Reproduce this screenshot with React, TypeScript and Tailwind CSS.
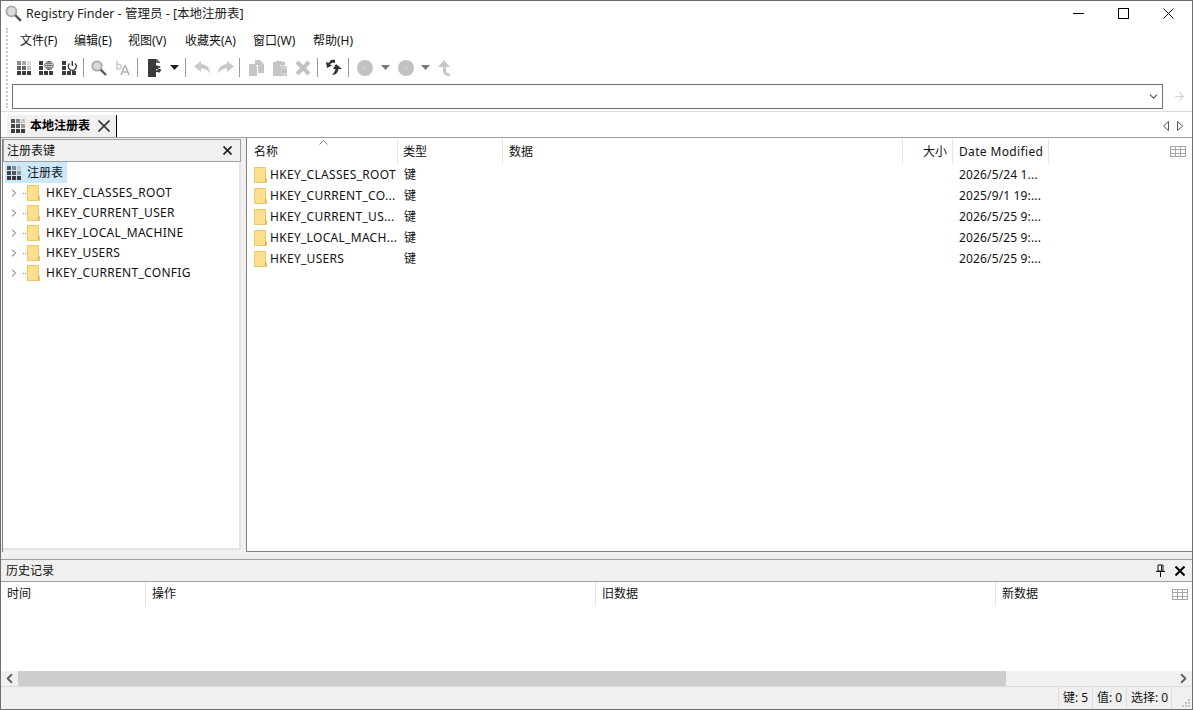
import React from 'react';
import { ChevronLeft, ChevronRight, ChevronDown, ArrowRight } from 'lucide-react';

const FONT = "font-['Noto_Sans','Noto_Sans_CJK_SC',sans-serif]";

function GridIcon({ colors }: { colors: string[] }) {
  return (
    <svg width="14" height="14" viewBox="0 0 14 14" shapeRendering="crispEdges">
      {colors.map((c, i) => (
        <rect key={i} x={(i % 3) * 5} y={Math.floor(i / 3) * 5} width="4" height="4" fill={c} />
      ))}
    </svg>
  );
}

const D = '#3a3a3a';
const toolbarGrid = ['#8a8a8a', '#a8a8a8', '#dedede', '#666', '#666', '#c4c4c4', D, D, D];
const treeGrid = ['#555', '#888', '#c8c8c8', '#444', '#555', '#999', D, D, D];

function GlobeGrid() {
  return (
    <svg width="15" height="14" viewBox="0 0 15 14">
      <g shapeRendering="crispEdges">
        {[0, 5, 10].map((x) => <rect key={x} x={x} y="10" width="4" height="4" fill={D} />)}
        {[0, 5].map((y) => <rect key={y} x="0" y={y} width="4" height="4" fill={D} />)}
      </g>
      <circle cx="10" cy="4.500" r="4.200" fill="#fff" stroke={D} strokeWidth="0.8" />
      <path d="M6 4.500h8M10 .5v8M7 2.300h6M7 6.700h6M10 .5c-2.400 2-2.400 6 0 8M10 .5c2.400 2 2.400 6 0 8" stroke={D} strokeWidth="0.6" fill="none" />
    </svg>
  );
}

function PowerGrid() {
  return (
    <svg width="15" height="14" viewBox="0 0 15 14">
      <g shapeRendering="crispEdges">
        {[0, 5, 10].map((x) => <rect key={x} x={x} y="10" width="4" height="4" fill={D} />)}
        {[0, 5].map((y) => <rect key={y} x="0" y={y} width="4" height="4" fill={D} />)}
      </g>
      <path d="M7.500 2.500a4 4 0 1 0 5.600 0" stroke={D} strokeWidth="1.300" fill="none" />
      <path d="M10.300 0v5" stroke={D} strokeWidth="1.400" />
    </svg>
  );
}

function Magnifier({ size = 16 }: { size?: number }) {
  return (
    <svg width={size} height={size} viewBox="0 0 16 16">
      <circle cx="6" cy="6" r="4.700" fill="#dcdcdc" stroke="#a8a8a8" strokeWidth="1.700" />
      <path d="M9.600 9.600L15 15" stroke="#555" strokeWidth="2.300" />
    </svg>
  );
}

function Folder() {
  return (
    <svg width="13" height="16" viewBox="0 0 13 16" className="shrink-0">
      <path d="M.5.5h11v11h1v4H.5z" fill="#fbdf8f" stroke="#ecc766" />
      <path d="M11.500 11.500V15" stroke="#d9b04f" />
    </svg>
  );
}

function Cross({ size, stroke = '#111', width = 1 }: { size: number; stroke?: string; width?: number }) {
  return (
    <svg width={size} height={size} viewBox={`0 0 ${size} ${size}`} className="shrink-0">
      <path d={`M.5.5L${size - 0.5} ${size - 0.5}M${size - 0.5} .5L.5 ${size - 0.5}`} stroke={stroke} strokeWidth={width} fill="none" />
    </svg>
  );
}

function Sep() {
  return <div className="w-px h-[19px] bg-[#9a9a9a] shrink-0" />;
}

function Caret({ color = '#1f1f1f' }: { color?: string }) {
  return (
    <svg width="9" height="5" viewBox="0 0 9 5">
      <path d="M0 0h9L4.500 5z" fill={color} />
    </svg>
  );
}

function GreyCircle({ arrow }: { arrow: 'l' | 'r' }) {
  return (
    <svg width="16" height="16" viewBox="0 0 16 16">
      <circle cx="8" cy="8" r="8" fill="#c2c2c2" />
      <path d={arrow === 'l' ? 'M10 8H6M8 6L6 8l2 2' : 'M6 8h4M8 6l2 2-2 2'} stroke="#cfcfcf" fill="none" />
    </svg>
  );
}

function TableIcon() {
  return (
    <svg width="16" height="11" viewBox="0 0 16 11" shapeRendering="crispEdges">
      <path d="M.5.5h15v10H.5zM.5 3.500h15M.5 7.500h15M5.500.5v10M10.500.5v10" fill="none" stroke="#a6a6a6" />
    </svg>
  );
}

function Toolbar() {
  return (
    <div className="h-[25px] flex items-center pl-[16px] mt-[2px]">
      <div className="w-[23px] shrink-0 pl-px"><GridIcon colors={toolbarGrid} /></div>
      <div className="w-[23px] shrink-0"><GlobeGrid /></div>
      <div className="w-[21px] shrink-0"><PowerGrid /></div>
      <Sep />
      <div className="w-[32px] shrink-0 pl-[7px]"><Magnifier /></div>
      <div className="w-[21px] shrink-0">
        <svg width="15" height="16" viewBox="0 0 15 16">
          <path d="M1 1v8h1.200a2.400 2.400 0 1 0 0-4.600" fill="none" stroke="#c4c4c4" strokeWidth="1.400" />
          <path d="M5 15l3.500-9h1l3.500 9M6.500 12h5" fill="none" stroke="#b4b4b4" strokeWidth="1.600" />
        </svg>
      </div>
      <Sep />
      <div className="w-[47px] shrink-0 pl-[10px] flex items-center">
        <svg width="13" height="18" viewBox="0 0 13 18" className="shrink-0">
          <path d="M0 0h8v18H0z" fill="#3a3a3a" />
          <path d="M8 0h1l3 3v1H8z" fill="#6a6a6a" />
          <path d="M7 8l2-2 1 1.200c1.200-.5 2.200 0 2.800 1l-1.800.8c-.4-.4-.8-.4-1.200 0l1 1H7z" fill="#3a3a3a" />
          <path d="M12.800 12l-2 2-1-1.200c-1.200.5-2.200 0-2.800-1l1.800-.8c.4.4.8.4 1.200 0l-1-1h3.800z" fill="#3a3a3a" />
        </svg>
        <div className="ml-[9px]"><Caret /></div>
      </div>
      <div className="-ml-[10px] w-[10px]" />
      <Sep />
      <div className="w-[31px] shrink-0 pl-[8px]">
        <svg width="17" height="14" viewBox="0 0 17 14">
          <path d="M7 0L0 5.500 7 11V7.500c4 0 7 1.500 9 5 0-5-3-9-9-9.500z" fill="#c8c8c8" />
        </svg>
      </div>
      <div className="w-[22px] shrink-0">
        <svg width="17" height="14" viewBox="0 0 17 14">
          <path d="M10 0l7 5.500L10 11V7.500c-4 0-7 1.500-9 5 0-5 3-9 9-9.500z" fill="#c8c8c8" />
        </svg>
      </div>
      <Sep />
      <div className="w-[33px] shrink-0 pl-[9px]">
        <svg width="15" height="16" viewBox="0 0 15 16">
          <path d="M6 0h5l4 4v9H9V5H6z" fill="#c4c4c4" />
          <path d="M0 4h5.500L8 6.500V16H0z" fill="#c4c4c4" />
        </svg>
      </div>
      <div className="w-[22px] shrink-0">
        <svg width="14" height="16" viewBox="0 0 14 16">
          <path d="M0 2h3V1h6v1h3v3H7v11H0z" fill="#c4c4c4" />
          <path d="M7.500 6h4.500l2 2v8H7.500z" fill="#d4d4d4" stroke="#c4c4c4" />
          <path d="M9 10h4M9 12h4" stroke="#a8a8a8" />
        </svg>
      </div>
      <div className="w-[22px] shrink-0">
        <svg width="16" height="16" viewBox="0 0 16 16">
          <path d="M2 2l12 12M14 2L2 14" stroke="#c2c2c2" strokeWidth="4" />
        </svg>
      </div>
      <Sep />
      <div className="w-[30px] shrink-0 pl-[8px]">
        <svg width="17" height="17" viewBox="0 0 17 17">
          <path d="M9 1C6 0 4 1 3 4L0 3l1 6 5-2.500-2-1c1-1.500 2.500-2 5-1.500z" fill="#2f2f2f" />
          <path d="M10 5l-3 5 2.500 0C9 12 8 14 6 16c4 0 6-3 6.500-6H16z" fill="#2f2f2f" />
        </svg>
      </div>
      <Sep />
      <div className="w-[32px] shrink-0 pl-[8px]"><GreyCircle arrow="l" /></div>
      <div className="w-[17px] shrink-0"><Caret color="#777" /></div>
      <div className="w-[23px] shrink-0"><GreyCircle arrow="r" /></div>
      <div className="w-[17px] shrink-0"><Caret color="#777" /></div>
      <div className="shrink-0">
        <svg width="13" height="16" viewBox="0 0 13 16">
          <path d="M6 0l6 7H8v3c0 2 1 3 4 4v2c-5 0-7-2-7-6V7H0z" fill="#c8c8c8" />
        </svg>
      </div>
    </div>
  );
}

const menus: [string, string][] = [
  ['文件(F)', 'w-[54px]'],
  ['编辑(E)', 'w-[54px]'],
  ['视图(V)', 'w-[57px]'],
  ['收藏夹(A)', 'w-[68px]'],
  ['窗口(W)', 'w-[60px]'],
  ['帮助(H)', 'w-[60px]'],
];

const treeKeys = ['HKEY_CLASSES_ROOT', 'HKEY_CURRENT_USER', 'HKEY_LOCAL_MACHINE', 'HKEY_USERS', 'HKEY_CURRENT_CONFIG'];

const listRows = [
  ['HKEY_CLASSES_ROOT', '2026/5/24 1...'],
  ['HKEY_CURRENT_CO...', '2025/9/1 19:...'],
  ['HKEY_CURRENT_US...', '2026/5/25 9:...'],
  ['HKEY_LOCAL_MACH...', '2026/5/25 9:...'],
  ['HKEY_USERS', '2026/5/25 9:...'],
];

export default function App() {
  return (
    <div className={`${FONT} relative w-[1193px] h-[710px] overflow-hidden bg-[#f0f0f0] border border-[#6e6e6e] text-[12px] leading-[16px] text-[#111] flex flex-col`}>
      {/* title bar */}
      <div className="h-[27px] bg-white flex items-center shrink-0 pl-[4px] pb-[2px]">
        <Magnifier size={17} />
        <span className="ml-[4px] text-[12.5px] text-[#222]">Registry Finder - 管理员 - [本地注册表]</span>
        <div className="ml-auto flex items-center pr-[18px] gap-[34px]">
          <div className="w-[11px] h-px bg-black" />
          <div className="w-[11px] h-[11px] border border-black" />
          <Cross size={11} />
        </div>
      </div>

      {/* menu, toolbar, address */}
      <div className="h-[83px] bg-white shrink-0 flex">
        <div className="w-[19px] shrink-0 flex justify-center -ml-[4px] pl-[1px]">
          <div className="w-[2px] h-[80px] border-l-2 border-dotted border-[#c4c4c4]" />
        </div>
        <div className="flex-1 min-w-0 -ml-[3px]">
          <div className="h-[25px] flex items-center pl-[7px]">
            {menus.map(([m, w]) => (
              <div key={m} className={`${w} shrink-0`}>{m}</div>
            ))}
          </div>
          <div className="-ml-[13px]"><Toolbar /></div>
          <div className="flex items-center mt-[4px] -ml-[1px]">
            <div className="w-[1151px] h-[25px] border border-[#6e6e6e] bg-white flex items-center justify-end pr-[2px] shrink-0">
              <ChevronDown size={13} className="text-[#555]" />
            </div>
            <ArrowRight size={13} className="ml-[10px] text-[#d0d0d0]" />
          </div>
        </div>
      </div>

      {/* tabs */}
      <div className="h-[26px] bg-white border-t border-[#dcdcdc] shrink-0 flex items-end pl-[6px]">
        <div className="h-[22px] w-[110px] bg-[#f0f0f0] flex items-center pl-[4px] border-r border-black shrink-0">
          <GridIcon colors={treeGrid} />
          <span className="ml-[5px] font-semibold text-black">本地注册表</span>
          <div className="ml-[8px]"><Cross size={12} stroke="#333" width={1.6} /></div>
        </div>
        <div className="ml-auto flex items-center h-[22px] pr-[9px] gap-[8px]">
          <svg width="6" height="10" viewBox="0 0 6 10"><path d="M5.500.5v9L.5 5z" fill="#fff" stroke="#555" /></svg>
          <svg width="6" height="10" viewBox="0 0 6 10"><path d="M.5.5v9l5-4.500z" fill="#fff" stroke="#555" /></svg>
        </div>
      </div>

      {/* main panes */}
      <div className="h-[415px] shrink-0 border-t border-[#a0a0a0] flex pl-px">
        <div className="w-[239px] shrink-0 mt-px border-l border-[#808080] flex flex-col">
          <div className="h-[23px] shrink-0 bg-[#f0f0f0] border border-[#a0a0a0] flex items-center justify-between pl-[3px] pr-[8px]">
            <span>注册表键</span>
            <Cross size={9} stroke="#222" width={1.7} />
          </div>
          <div className="flex-1 bg-white border-r-2 border-b-2 border-[#e4e4e4] pl-[2px] mb-[2px]">
            <div className="h-[21px] w-[62px] bg-[#cce8ff] flex items-center pl-[2px]">
              <GridIcon colors={treeGrid} />
              <span className="ml-[6px]">注册表</span>
            </div>
            {treeKeys.map((k) => (
              <div key={k} className="h-[20px] flex items-center pl-[3px]">
                <ChevronRight size={12} strokeWidth={2.4} className="text-[#a0a0a0] shrink-0" />
                <div className="ml-[3px] w-[3px] border-t border-dotted border-[#888] shrink-0" />
                <div className="ml-[1px]"><Folder /></div>
                <span className="ml-[6px] tracking-[0.3px] whitespace-nowrap">{k}</span>
              </div>
            ))}
          </div>
        </div>

        <div className="ml-[5px] flex-1 min-w-0 bg-white border-l border-b border-[#808080] relative">
          <div className="h-[26px] pt-px flex items-center">
            <div className="w-[151px] pl-[7px] border-r border-[#e4e4e4] h-full flex items-center relative">
              名称
              <svg width="9" height="5" viewBox="0 0 9 5" className="absolute left-[72px] top-[1px]"><path d="M.5 4.500L4.500.5l4 4" fill="none" stroke="#888" /></svg>
            </div>
            <div className="w-[105px] pl-[5px] border-r border-[#e4e4e4] h-full flex items-center">类型</div>
            <div className="w-[400px] pl-[6px] border-r border-[#e4e4e4] h-full flex items-center">数据</div>
            <div className="w-[50px] pr-[5px] border-r border-[#e4e4e4] h-full flex items-center justify-end">大小</div>
            <div className="w-[96px] pl-[6px] border-r border-[#e4e4e4] h-full flex items-center tracking-[0.35px] whitespace-nowrap">Date Modified</div>
            <div className="ml-auto pr-[6px] flex items-center"><TableIcon /></div>
          </div>
          {listRows.map(([n, d]) => (
            <div key={n} className="h-[21px] flex items-center">
              <div className="w-[151px] pl-[7px] flex items-center shrink-0 whitespace-nowrap">
                <Folder />
                <span className="ml-[3px] tracking-[0.3px]">{n}</span>
              </div>
              <div className="w-[555px] pl-[6px] shrink-0">键</div>
              <div className="pl-[6px] tracking-[0.15px]">{d}</div>
            </div>
          ))}
        </div>
      </div>

      <div className="h-[7px] shrink-0" />

      {/* history */}
      <div className="shrink-0 border-y border-[#a0a0a0] h-[23px] flex items-center pl-[5px] pr-[7px] bg-[#f0f0f0]">
        <span>历史记录</span>
        <div className="ml-auto flex items-center gap-[9px]">
          <svg width="11" height="13" viewBox="0 0 11 13"><path d="M3 1h5v6H3zM1 7.500h9M5.500 8v5M6.500 1.500v5" fill="none" stroke="#111" /></svg>
          <Cross size={10} stroke="#000" width={2} />
        </div>
      </div>
      <div className="h-[89px] shrink-0 bg-white">
        <div className="h-[24px] flex items-center">
          <div className="w-[145px] pl-[6px] border-r border-[#e4e4e4] h-full flex items-center">时间</div>
          <div className="w-[450px] pl-[6px] border-r border-[#e4e4e4] h-full flex items-center">操作</div>
          <div className="w-[400px] pl-[6px] border-r border-[#e4e4e4] h-full flex items-center">旧数据</div>
          <div className="pl-[6px]">新数据</div>
          <div className="ml-auto pr-[4px] flex items-center"><TableIcon /></div>
        </div>
      </div>

      {/* horizontal scrollbar */}
      <div className="h-[15px] shrink-0 bg-[#f0f0f0] flex items-center">
        <div className="w-[17px] shrink-0 flex justify-center"><ChevronLeft size={15} strokeWidth={3} className="text-[#606060]" /></div>
        <div className="w-[988px] h-full bg-[#cdcdcd] shrink-0" />
        <div className="ml-auto w-[17px] flex justify-center"><ChevronRight size={15} strokeWidth={3} className="text-[#606060]" /></div>
      </div>

      {/* status bar */}
      <div className="flex-1 min-h-0 border-t border-[#dcdcdc] flex items-center justify-end relative">
        <div className="w-[34px] h-full border-l border-[#dcdcdc] pl-[4px] flex items-center whitespace-nowrap">键: 5</div>
        <div className="w-[34px] h-full border-l border-[#dcdcdc] pl-[4px] flex items-center whitespace-nowrap">值: 0</div>
        <div className="w-[46px] h-full border-x border-[#dcdcdc] pl-[4px] flex items-center whitespace-nowrap">选择: 0</div>
        <div className="w-[20px] h-full flex items-end justify-end pr-px pb-px">
          <svg width="9" height="9" viewBox="0 0 9 9">
            <path d="M6 0h2v2H6zM3 3h2v2H3zM6 3h2v2H6zM0 6h2v2H0zM3 6h2v2H3zM6 6h2v2H6z" fill="#c4c4c4" />
          </svg>
        </div>
      </div>
    </div>
  );
}
